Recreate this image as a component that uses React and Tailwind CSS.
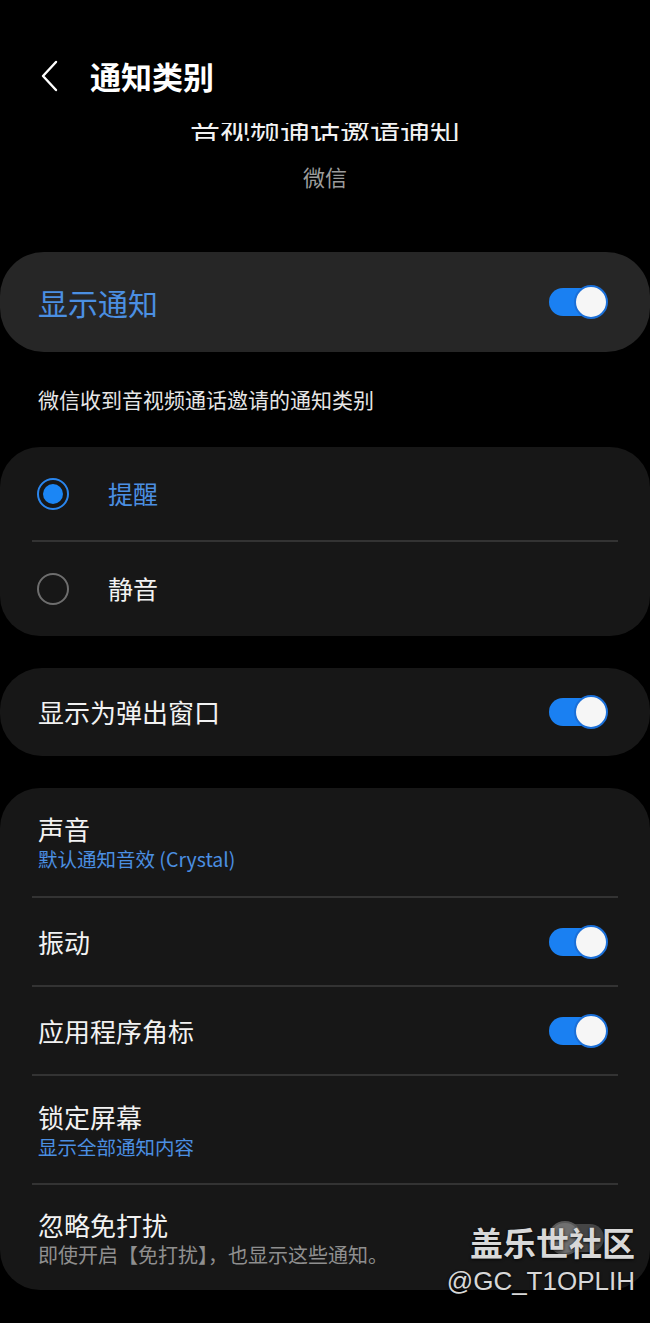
const font = { fontFamily: '"Noto Sans CJK SC", "Noto Sans", sans-serif' };

const Toggle = ({ on = true, dim = false }) => (
  <div className={`relative w-[60px] h-[36px] flex items-center shrink-0 ${dim ? 'opacity-40' : ''}`}>
    <div className={`absolute left-[1px] right-[4px] h-[28px] rounded-full ${on ? 'bg-[#1a80f2]' : 'bg-[#8a8a8a]'}`} />
    <div
      className={`absolute top-[1px] w-[34px] h-[34px] rounded-full bg-[#f6f6f6] border-2 ${
        on ? 'right-0 border-[#1a6fd8]' : 'left-0 border-[#bdbdbd]'
      }`}
    />
  </div>
);

const Radio = ({ checked }) =>
  checked ? (
    <div className="w-[32px] h-[32px] rounded-full border-2 border-[#2a86ee] flex items-center justify-center">
      <div className="w-[20px] h-[20px] rounded-full bg-[#1b86f5]" />
    </div>
  ) : (
    <div className="w-[32px] h-[32px] rounded-full border-2 border-[#6e6e6e]" />
  );

const Divider = () => <div className="mx-[32px] h-[2px] bg-[#333333]" />;

const ToggleRow = ({ label, h }) => (
  <div className={`flex items-center justify-between pl-[38px] pr-[42px] ${h}`}>
    <span className="text-[26px] text-[#f2f2f2] leading-[34px]">{label}</span>
    <Toggle />
  </div>
);

const TwoLineRow = ({ label, sub, subColor, h }) => (
  <div className={`flex flex-col justify-center pl-[38px] pr-[42px] ${h}`}>
    <span className="text-[26px] text-[#f2f2f2] leading-[34px]">{label}</span>
    <span className={`text-[19.5px] leading-[26px] ${subColor}`}>{sub}</span>
  </div>
);

export default function App() {
  return (
    <div className="relative min-h-[1323px] w-[650px] bg-black overflow-hidden" style={font}>
      {/* Header */}
      <header className="pt-[46px] h-[105px] flex items-center">
        <svg className="ml-[40px] w-[20px] h-[32px] text-white" viewBox="0 0 20 32" fill="none">
          <path d="M16 2 L3 16 L16 30" stroke="currentColor" strokeWidth="2.4" strokeLinecap="round" strokeLinejoin="round" />
        </svg>
        <h1 className="ml-[30px] text-[31px] font-bold text-white leading-none">通知类别</h1>
      </header>

      {/* Clipped channel title */}
      <div className="mt-[18px] h-[18px] overflow-hidden flex items-end justify-center">
        <span className="text-[30px] text-[#f2f2f2] leading-none translate-y-[3px]">音视频通话邀请通知</span>
      </div>
      <p className="mt-[20px] text-center text-[22px] leading-[30px] text-[#9c9c9c]">微信</p>

      {/* Show notifications */}
      <div className="mt-[61px] h-[100px] rounded-[44px] bg-[#262626] flex items-center justify-between pl-[38px] pr-[42px]">
        <span className="text-[30px] text-[#4b8fe2] leading-none">显示通知</span>
        <Toggle />
      </div>

      <p className="mt-[33px] pl-[38px] text-[21px] leading-[28px] text-[#e6e6e6]">微信收到音视频通话邀请的通知类别</p>

      {/* Alert type */}
      <div className="mt-[34px] rounded-[40px] bg-[#171717]">
        <div className="h-[93px] flex items-center pl-[37px] gap-[39px]">
          <Radio checked />
          <span className="text-[25px] text-[#4b8fe2]">提醒</span>
        </div>
        <Divider />
        <div className="h-[94px] flex items-center pl-[37px] gap-[39px]">
          <Radio />
          <span className="text-[25px] text-[#f2f2f2]">静音</span>
        </div>
      </div>

      {/* Pop-up */}
      <div className="mt-[32px] h-[88px] rounded-[42px] bg-[#171717] flex items-center justify-between pl-[38px] pr-[42px]">
        <span className="text-[26px] text-[#f2f2f2] leading-[34px]">显示为弹出窗口</span>
        <Toggle />
      </div>

      {/* Other settings */}
      <div className="mt-[32px] rounded-[40px] bg-[#171717]">
        <TwoLineRow label="声音" sub="默认通知音效 (Crystal)" subColor="text-[#4b8fe2]" h="h-[108px]" />
        <Divider />
        <ToggleRow label="振动" h="h-[87px]" />
        <Divider />
        <ToggleRow label="应用程序角标" h="h-[87px]" />
        <Divider />
        <TwoLineRow label="锁定屏幕" sub="显示全部通知内容" subColor="text-[#4b8fe2]" h="h-[107px]" />
        <Divider />
        <div className="h-[105px] flex items-center justify-between pl-[38px] pr-[42px]">
          <div className="flex flex-col">
            <span className="text-[26px] text-[#f2f2f2] leading-[34px]">忽略免打扰</span>
            <span className="text-[20px] leading-[26px] text-[#8f8f8f]">即使开启【免打扰】，也显示这些通知。</span>
          </div>
          <Toggle on={false} dim />
        </div>
      </div>

      {/* Watermark */}
      <div className="absolute right-[15px] top-[1221px] flex flex-col items-end text-[#d8d8d8] [text-shadow:0_1px_3px_rgba(0,0,0,0.9)]">
        <span className="text-[33px] font-bold leading-[42px]">盖乐世社区</span>
        <span className="text-[26px] leading-[36px]" style={{ fontFamily: '"Liberation Sans", sans-serif' }}>@GC_T1OPLIH</span>
      </div>
    </div>
  );
}
